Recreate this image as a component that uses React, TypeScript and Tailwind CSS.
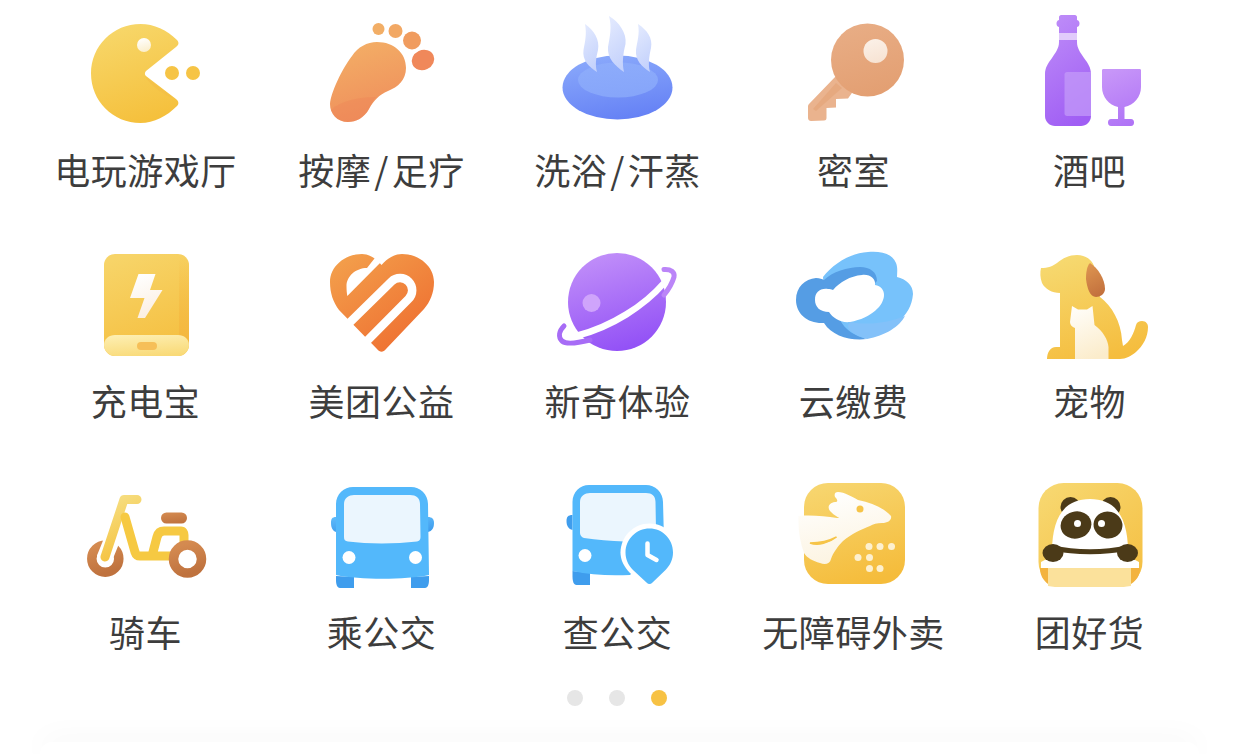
import React from "react";

const Grad = ({ id, a, b, diag }: { id: string; a: string; b: string; diag?: boolean }) => (
  <linearGradient id={id} x1={diag ? "0.1" : "0.3"} y1="0" x2={diag ? "0.9" : "0.6"} y2="1">
    <stop offset="0" stopColor={a} />
    <stop offset="1" stopColor={b} />
  </linearGradient>
);

const Svg = ({ box, children }: { box: string; children: React.ReactNode }) => (
  <svg viewBox={box} width={120} height={120} className="block overflow-visible">
    {children}
  </svg>
);

const Pacman = () => (
  <Svg box="86 13 120 120">
    <defs>
      <Grad id="pac" a="#f7d76a" b="#f5c03c" />
      <Grad id="eye" a="#ffffff" b="#fbeecb" />
    </defs>
    <path
      d="M140.5 24 C154 24 167 30 177 40 C179.5 43 178.500 45 176 47 L146 71 C144.500 72.500 144.500 75 146 76 L176 99 C179 101.500 179 104 177 106 C167 116 154 123 140.500 123 C113 123 91 101 91 73.500 C91 46 113 24 140.500 24Z"
      fill="url(#pac)"
    />
    <path d="M145 76 C150 86 165 95 173 98 L146 77Z" fill="#f3bb45" opacity="0.5" />
    <circle cx="144" cy="45" r="7" fill="url(#eye)" />
    <circle cx="172" cy="73" r="7" fill="#f6c445" />
    <circle cx="193" cy="73" r="7" fill="#f6c445" />
  </Svg>
);

const Foot = () => (
  <Svg box="322 13 120 120">
    <defs>
      <Grad id="foot" a="#f3ae66" b="#ef8d5b" />
    </defs>
    <path
      d="M377 42 C394 42 406 53 406 68 C406 80 398 87 388 91 C379 95 374 100 369 109 C364 118 356 122 348 122 C337 122 330 114 330 104 C331 92 342 69 352 56 C358 47 367 42 377 42Z"
      fill="url(#foot)"
    />
    <path
      d="M376 97 C373 100 371 105 369 109 C364 118 356 122 348 122 C340 122 334 117 331 110 C340 101 358 97 376 97Z"
      fill="#ee8257"
      opacity="0.35"
    />
    <circle cx="378.500" cy="29" r="6" fill="#f2ae66" />
    <circle cx="395.500" cy="31" r="7" fill="#f2a864" />
    <ellipse cx="412" cy="40.500" rx="9" ry="9" fill="#f09c5f" />
    <ellipse cx="423" cy="60" rx="11.500" ry="10" fill="#f0885a" transform="rotate(-25 423 60)" />
  </Svg>
);

const Steam = () => (
  <Svg box="558 13 120 120">
    <defs>
      <Grad id="bowl" a="#8aa9fb" b="#6581f5" />
      <Grad id="bowl2" a="#8dacfb" b="#86a5fa" />
      <Grad id="st" a="#e2e9fe" b="#c3d1fc" />
    </defs>
    <ellipse cx="617.500" cy="87.500" rx="55" ry="32" fill="url(#bowl)" />
    <ellipse cx="618" cy="80" rx="40" ry="17.500" fill="url(#bowl2)" />
    <path d="M585 24 C594 30 600 40 598 50 C596 58 595 65 597 72 C589 67 582 60 583.500 50 C585 42 587 34 585 24Z" fill="url(#st)" />
    <path d="M609 16 C619 22 627 33 625.500 44 C623 54 622 63 624 72 C615 66 607 58 608 47 C610 36 612 27 609 16Z" fill="url(#st)" />
    <path d="M638 24 C647 30 653 38 651 48 C649 57 648 65 650 72 C642 67 635 60 636 50 C637 42 640 34 638 24Z" fill="url(#st)" />
  </Svg>
);

const Key = () => (
  <Svg box="794 13 120 120">
    <defs>
      <Grad id="key" a="#e8ad85" b="#e39f72" />
      <Grad id="hole" a="#fbf0e7" b="#f7e3d3" />
    </defs>
    <path
      d="M836 76 L809 104 C808 105 808 106 808 107 L808 118 C808 120 809.500 121 811 121 L824 120.500 C826 120.500 826.500 119 826.500 118 L826.500 108 L836 107.500 L836 99 L848 98.500 L854 90Z"
      fill="#eab38e"
    />
    <path d="M836 83 L813 109 L816 111 L842 88Z" fill="#e5a67c" opacity="0.8" />
    <ellipse cx="867.500" cy="60" rx="36.500" ry="36.500" fill="url(#key)" />
    <circle cx="875.500" cy="51" r="12" fill="url(#hole)" />
  </Svg>
);

const Wine = () => (
  <Svg box="1030 13 120 120">
    <defs>
      <Grad id="win" a="#bd8bf8" b="#a05ef4" />
      <Grad id="glass" a="#c796f8" b="#b074f6" />
    </defs>
    <path
      d="M1059 17 C1059 16 1060 15 1061 15 L1075 15 C1076 15 1077 16 1077 17 L1077 20 C1079 20.500 1079.500 22 1079.500 23.500 C1079.500 25 1079 26.500 1077 27 L1077 42 C1077 48 1080 52 1084 58 C1088 63 1091 68 1091 74 L1091 116 C1091 122 1086 126 1081 126 L1055 126 C1050 126 1045 122 1045 116 L1045 74 C1045 68 1048 63 1052 58 C1056 52 1059 48 1059 42 L1059 27 C1057 26.500 1056.500 25 1056.500 23.500 C1056.500 22 1057 20.500 1059 20Z"
      fill="url(#win)"
    />
    <rect x="1059" y="33" width="18" height="7" fill="#e1cbfb" />
    <path d="M1067 72 L1091 72 L1091 116 L1067 116 C1065.500 116 1064.500 115 1064.500 113.500 L1064.500 74.500 C1064.500 73 1065.500 72 1067 72Z" fill="#c59df9" opacity="0.7" />
    <path
      d="M1103.500 69 L1139.500 69 C1140.500 69 1141 69.500 1141 70.500 L1141 87 C1141 97 1134 105 1124.500 107 L1124.500 119 L1131 119 C1133 119 1134 120.500 1134 122.500 C1134 124.500 1133 126 1131 126 L1111 126 C1109 126 1108 124.500 1108 122.500 C1108 120.500 1109 119 1111 119 L1118 119 L1118 107 C1109 105 1102 97 1102 87 L1102 70.500 C1102 69.500 1102.500 69 1103.500 69Z"
      fill="url(#glass)"
    />
  </Svg>
);

const Battery = () => (
  <Svg box="86 244 120 120">
    <defs>
      <Grad id="bat" a="#f7d468" b="#f5bf40" />
      <Grad id="batb" a="#fdeeb0" b="#f9da78" />
      <Grad id="bolt" a="#ffffff" b="#fbeee0" />
      <linearGradient id="side" x1="0" y1="0" x2="0" y2="1">
        <stop offset="0" stopColor="#f4b63f" stopOpacity="0" />
        <stop offset="1" stopColor="#f4b63f" stopOpacity="0.9" />
      </linearGradient>
    </defs>
    <rect x="104" y="254" width="85" height="102" rx="11" fill="url(#bat)" />
    <path d="M179 256 L179 340 L189 345 L189 265 C189 260 184 256 179 256Z" fill="url(#side)" />
    <path d="M104 345 C104 339 109 335 115 335 L178 335 C184 335 189 339 189 345 C189 351 184 356 178 356 L115 356 C109 356 104 351 104 345Z" fill="url(#batb)" />
    <rect x="137" y="342" width="20" height="8" rx="4" fill="#f6bf58" />
    <path d="M138.500 274 L155.500 274 L150 290 L162.500 290 L145 318 L137.500 318 L144.500 298 L130 298Z" fill="url(#bolt)" />
  </Svg>
);

const Heart = () => (
  <Svg box="322 244 120 120">
    <defs>
      <Grad id="heart" a="#f3a04c" b="#ee6a2e" diag />
    </defs>
    <path
      d="M381.500 265 C388 258 394 254 402 254 C420 254 434 267 434 282 C434 293 430 302 424 309 L386 349 C383 352.500 380 352.500 377 349 L339 310 C333 302 330 293 330 282 C330 267 344 254 362 254 C369 254 376 258 381.500 265Z"
      fill="url(#heart)"
    />
    <path d="M339 333 L391.500 281.500 A12 12 0 0 1 408.500 299 L359 349" fill="none" stroke="#ffffff" strokeWidth="8.500" />
    <path d="M347.300 296 L384 259 L378 254 L367 268 C356 268 346.500 276 346.500 286 C346.500 290 346.800 293 347.300 296Z" fill="#ffffff" />
  </Svg>
);

const Planet = () => (
  <Svg box="558 244 120 120">
    <defs>
      <Grad id="pla" a="#c18ff9" b="#9250f6" />
    </defs>
    <circle cx="617" cy="302" r="49" fill="url(#pla)" />
    <circle cx="591.500" cy="303" r="9" fill="#cfa4fb" />
    <path d="M664 283 C645 305 612 327 576 336" fill="none" stroke="#ffffff" strokeWidth="6.500" />
    <path d="M664 269.500 C671 269 675 272 674 277 C672 284 668 290 664 295" fill="none" stroke="#bb85f8" strokeWidth="5" strokeLinecap="round" />
    <path d="M564 326 C559 331 558 337 562 341 C566 344.500 578 343 590 340" fill="none" stroke="#a76cf6" strokeWidth="5" strokeLinecap="round" />
  </Svg>
);

const CloudIcon = () => (
  <Svg box="794 244 120 120">
    <path
      d="M823 277 C833 264 850 253 868 252 C880 251 892 253 896 263 C898 268 897 273 897 277 C906 279 913 285 913 294 C912 306 907 314 898 322 C885 332 873 337 860 339 C845 340 832 331 826 318Z"
      fill="#77c2fb"
    />
    <path
      d="M796 300 C796 287 805 279 816 278 C820 278 822 279 824 280 C832 272 848 267 860 267 C870 267 877 272 877 281 L840 320 C845 330 855 336 867 339 C850 341 832 336 824 323 C808 324 796 314 796 300Z"
      fill="#559de4"
    />
    <path
      d="M850 322 C844 328 853 335 867 339 C885 336 900 326 905 316 C890 322 870 326 850 322Z"
      fill="#83c1f9"
    />
    <path
      d="M815 300 C815 292 820 288 828 289 C830 289 831 289 833 290 C840 282 850 276 862 275 C870 274 876 279 875 285 C881 286 884 290 884 295 C884 305 872 318 850 322 C840 323 833 318 829 312 C820 312 815 307 815 300Z"
      fill="#ffffff"
    />
  </Svg>
);

const Pet = () => (
  <Svg box="1030 244 120 120">
    <defs>
      <Grad id="dog" a="#f6d970" b="#f5bd3e" />
      <Grad id="ear" a="#dd9450" b="#c2703d" />
      <Grad id="cat" a="#fffdf8" b="#fbeccb" />
    </defs>
    <path
      d="M1041 268 C1048 268 1053 266 1057 263 C1063 258 1069 255 1077 255 C1086 255 1092 260 1094 266 L1100 297 C1112 306 1121 322 1122 340 L1123 346 C1130 342 1134 333 1136 325 C1137 322 1139 321 1142 321 C1146 321 1148 324 1148 327 C1148 337 1143 346 1136 352 C1131 356 1126 359 1120 359 L1047 359 C1047 353 1050 347 1056 347 L1060 347 L1060 293 C1052 293 1045 289 1042 283 C1040 278 1040 272 1041 268Z"
      fill="url(#dog)"
    />
    <path d="M1090 263 C1098 268 1105 279 1105 289 C1105 294 1100 297 1096 297 C1090 297 1087 288 1086 279 C1086 272 1087 266 1090 263Z" fill="url(#ear)" />
    <path d="M1072 306 L1078 309.500 L1087 309.500 L1092.500 306 L1094.500 325 C1103 331 1108 340 1108.500 347 L1108.500 359 L1075 359 L1075 328 C1072 327 1070 325 1070 322Z" fill="url(#cat)" />
  </Svg>
);

const Bike = () => (
  <Svg box="86 475 120 120">
    <defs>
      <Grad id="frame" a="#f6dd7f" b="#f5c23e" />
      <Grad id="tyre" a="#d48a50" b="#bf723e" />
    </defs>
    <circle cx="105.300" cy="558.700" r="13.500" fill="none" stroke="url(#tyre)" strokeWidth="9.500" />
    <path d="M124 510 L105 557" fill="none" stroke="#ffffff" strokeWidth="16" strokeLinecap="round" />
    <path d="M137 499.500 L124 499.500 L105 557" fill="none" stroke="url(#frame)" strokeWidth="9" strokeLinecap="round" strokeLinejoin="round" />
    <path d="M125 517 L135 552 C136 555 137 556 140 556 L172 556 M152 556 L157 537 C158 533 160 531 164 531 L181 531 C183 531 184 533 184 535 L184 545" fill="none" stroke="#f6c942" strokeWidth="9" strokeLinecap="round" strokeLinejoin="round" />
    <rect x="161" y="512.500" width="26" height="11" rx="5.500" fill="url(#tyre)" />
    <circle cx="187.500" cy="559" r="14" fill="#ffffff" stroke="url(#tyre)" strokeWidth="9.500" />
  </Svg>
);

const Bus = () => (
  <Svg box="322 475 120 120">
    <defs>
      <Grad id="mirror" a="#5db9fa" b="#3f9ded" />
    </defs>
    <path d="M336 517 C332 517 331 519 331 523 C331 528 333 531 336 532Z M428 517 C432 517 434 519 434 523 C434 528 432 531 428 532Z" fill="url(#mirror)" />
    <path d="M336 576 L336 580 C336 584 337 588 340 588 L354 588 L354 577Z M429 576 L429 580 C429 584 428 588 425 588 L411 588 L411 577Z" fill="#3f9ded" />
    <path d="M336 504 C336 494 344 487 353 487 L411 487 C420 487 428 494 428 504 L429 575 C405 580 360 580 336 575Z" fill="#53b8fb" />
    <path d="M344 504 C344 498 349 495 354 495 L410 495 C416 495 420 498 420 504 L420.500 537 C420.500 540 419 541 417 541.500 C395 544 368 544 348 541.500 C345 541 344 540 344 537Z" fill="#ebf6fe" />
    <circle cx="349" cy="557.500" r="6.500" fill="#ffffff" />
    <circle cx="415.500" cy="557.500" r="6.500" fill="#ffffff" />
  </Svg>
);

const BusPin = () => (
  <Svg box="558 475 120 120">
    <path d="M572.500 515 C568 515 566.500 517 566.500 521 C566.500 526 568.500 529 572.500 530Z" fill="#3f9ded" />
    <path d="M572.500 571 L572.500 576 C572.500 581 573.500 585 576.500 585 L590 585 L590 573Z" fill="#3f9ded" />
    <path d="M572.500 502 C572.500 492 580 485 589 485 L646 485 C655 485 663 492 663 502 L664 540 L630 575 C610 576 590 575 572.500 571Z" fill="#53b8fb" />
    <path d="M580 502 C580 496 585 493 590 493 L646 493 C652 493 655.500 496 655.500 502 L656 530 L625 541.500 C610 541 597 540 584 538 C581.500 537.500 580 535 580 533Z" fill="#ebf6fe" />
    <circle cx="585" cy="555.500" r="6.500" fill="#ffffff" />
    <path d="M649.500 590 L630 573 C624 567 620.500 560 620.500 552.500 C620.500 536.500 633.500 523.500 649.500 523.500 C665.500 523.500 678.500 536.500 678.500 552.500 C678.500 560 675 567 669 573Z" fill="#ffffff" />
    <path d="M649.500 584 C648.500 584 647.500 583.500 646.500 582.500 L633 570 C628 565 625.500 559 625.500 552.500 C625.500 539 636.500 528.500 649.500 528.500 C662.500 528.500 673 539 673 552.500 C673 559 670.500 565 665.500 570 L652.500 582.500 C651.500 583.500 650.500 584 649.500 584Z" fill="#53b8fb" />
    <path d="M647.500 543.500 L647.500 555 L656.500 560" fill="none" stroke="#ffffff" strokeWidth="4.500" strokeLinecap="round" strokeLinejoin="round" />
  </Svg>
);

const Access = () => (
  <Svg box="794 475 120 120">
    <defs>
      <Grad id="acc" a="#f7d56e" b="#f5bc3b" />
      <Grad id="roo" a="#ffffff" b="#fcf3df" />
    </defs>
    <rect x="804" y="483" width="101" height="101" rx="24" fill="url(#acc)" />
    <path
      d="M838 492 C844 492 853 497 858 500 C872 503 884 508 891 516 C892 520 888 523 882 523 C877 523 873 524 870 526 C862 529 851 534 843 541 C838 546 833 553 831 559 C830 564 825 565 820 563 C813 561 807 558 804 553 C800 542 798 530 798.500 516 C810 515 825 516 837 518 C848 518 860 520 870 526 C855 525 838 520 830 511 C827 507 829 503 835 502 C838 502 838 500 835 497 C834 494 835 492 838 492Z"
      fill="url(#roo)"
    />
    <circle cx="860" cy="509" r="3.500" fill="#f6c448" />
    <path d="M810 543 C818 546 829 543 836.500 537 C829 541 820 543 810 543Z" fill="#f6c448" stroke="#f6c448" strokeWidth="1.500" />
    <g fill="#fdf0cf">
      <circle cx="869" cy="546.500" r="3.500" />
      <circle cx="880" cy="546.500" r="3.500" />
      <circle cx="891.500" cy="546.500" r="3.500" />
      <circle cx="858" cy="557.500" r="3.500" />
      <circle cx="869.500" cy="557.500" r="3.500" />
      <circle cx="869.500" cy="568.500" r="3.500" />
      <circle cx="880" cy="568.500" r="3.500" />
    </g>
  </Svg>
);

const Panda = () => (
  <Svg box="1030 475 120 120">
    <defs>
      <Grad id="pan" a="#f7d871" b="#f5bf42" diag />
    </defs>
    <rect x="1038.500" y="483" width="104" height="104" rx="25" fill="url(#pan)" />
    <circle cx="1070.500" cy="507" r="10" fill="#4b3a18" />
    <circle cx="1110.500" cy="507" r="10" fill="#4b3a18" />
    <path d="M1052 552 C1052 515 1066 499 1090 499 C1114 499 1128 515 1128 552Z" fill="#ffffff" />
    <ellipse cx="1076" cy="525" rx="15.500" ry="13.500" fill="#4b3a18" transform="rotate(-15 1076 525)" />
    <ellipse cx="1108" cy="525" rx="14.500" ry="13.500" fill="#4b3a18" transform="rotate(15 1108 525)" />
    <circle cx="1077.500" cy="523.500" r="3.500" fill="#ffffff" />
    <circle cx="1101.500" cy="523.500" r="3.500" fill="#ffffff" />
    <path d="M1041 568 L1041 562 L1060 552 L1120 552 L1139 562 L1139 568Z" fill="#ffffff" />
    <path d="M1040 568 L1048 568 L1048 584 C1043 580 1040 575 1040 568Z M1131 568 L1140 568 C1140 575 1137 580 1131 584Z" fill="#f3b33f" />
    <path d="M1048 568 L1131 568 L1131 586 C1125 587 1122 587 1118 587 L1062 587 C1058 587 1052 587 1048 586Z" fill="#fbe19b" />
    <path d="M1053 548 C1075 553 1105 553 1127 548" fill="none" stroke="#4b3a18" strokeWidth="5" />
    <ellipse cx="1053" cy="553" rx="10.500" ry="9" fill="#4b3a18" />
    <ellipse cx="1127.500" cy="553" rx="10.500" ry="9" fill="#4b3a18" />
  </Svg>
);

const items: { label: React.ReactNode; icon: React.ReactNode }[] = [
  { label: "电玩游戏厅", icon: <Pacman /> },
  { label: <>按摩<span className="mx-[3px]">/</span>足疗</>, icon: <Foot /> },
  { label: <>洗浴<span className="mx-[3px]">/</span>汗蒸</>, icon: <Steam /> },
  { label: "密室", icon: <Key /> },
  { label: "酒吧", icon: <Wine /> },
  { label: "充电宝", icon: <Battery /> },
  { label: "美团公益", icon: <Heart /> },
  { label: "新奇体验", icon: <Planet /> },
  { label: "云缴费", icon: <CloudIcon /> },
  { label: "宠物", icon: <Pet /> },
  { label: "骑车", icon: <Bike /> },
  { label: "乘公交", icon: <Bus /> },
  { label: "查公交", icon: <BusPin /> },
  { label: "无障碍外卖", icon: <Access /> },
  { label: "团好货", icon: <Panda /> },
];

export default function App() {
  return (
    <div className="flex h-[754px] w-[1239px] flex-col overflow-hidden bg-white pt-[13px] font-['Noto_Sans_CJK_SC','Noto_Sans',sans-serif]">
      <div className="ml-[28px] grid w-[1180px] grid-cols-5 gap-y-[49px]">
        {items.map((item, i) => (
          <div key={i} className="flex flex-col items-center">
            {item.icon}
            <p className="mt-[12px] mb-[2px] h-[48px] pr-[1px] text-[36px] leading-[48px] font-normal tracking-[0.5px] whitespace-nowrap text-[#3d3d3d]">
              {item.label}
            </p>
          </div>
        ))}
      </div>
      <div className="mt-[33px] flex justify-center gap-[26px] pr-[6px]">
        <span className="h-4 w-4 rounded-full bg-[#e6e6e6]" />
        <span className="h-4 w-4 rounded-full bg-[#e6e6e6]" />
        <span className="h-4 w-4 rounded-full bg-[#f7c244]" />
      </div>
      <div className="mx-[40px] mt-[36px] flex-1 rounded-t-[16px] bg-white shadow-[0_-2px_30px_rgba(0,0,0,0.05)]" />
    </div>
  );
}
